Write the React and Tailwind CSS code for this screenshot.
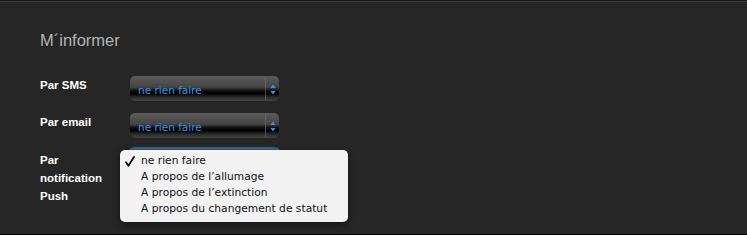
function Arrows() {
  return (
    <svg width="6" height="11" viewBox="0 0 6 11" className="block">
      <path d="M3 0.5 L5.6 4 L0.4 4 Z" fill="#3a8fe6" />
      <path d="M3 10.5 L5.6 7 L0.4 7 Z" fill="#3a8fe6" />
    </svg>
  );
}

function CheckMark() {
  return (
    <svg width="10" height="11" viewBox="0 0 10 11" className="block">
      <path d="M1 6.2 L3.4 9.8 L9 1" fill="none" stroke="#000" strokeWidth="1.7" strokeLinecap="round" strokeLinejoin="round" />
    </svg>
  );
}

function FakeSelect({ focused, label }) {
  return (
    <div
      className={
        "relative w-[149px] h-[25px] rounded-[5px] flex items-center bg-[linear-gradient(to_bottom,#5c5c5c_0%,#444_45%,#111_58%,#000_70%,#2a2a2a_85%,#444_100%)] " +
        (focused ? "ring-2 ring-[#3f7fc4]/70" : "")
      }
    >
      <span className="flex-1 pl-[8px] pt-[3px] text-[10.5px] text-[#3a8fe6] leading-none font-['DejaVu_Sans',sans-serif]">
        {label}
      </span>
      <div className="w-px self-stretch my-[1px] bg-[#6a6a6a]/70" />
      <div className="w-[13px] flex justify-center pt-[2px]">
        <Arrows />
      </div>
    </div>
  );
}

const items = [
  "ne rien faire",
  "A propos de l’allumage",
  "A propos de l’extinction",
  "A propos du changement de statut",
];

export default function App() {
  return (
    <div className="w-[747px] h-[235px] bg-[#262626] border-t border-[#151515] font-['Liberation_Sans',Arial,sans-serif]">
      <div className="h-full border-t border-[#3d3d3d] border-b border-b-black pl-[40px] pt-[28px]">
        <h2 className="text-[16.5px] leading-[20px] text-[#b3b3b3]">M´informer</h2>

        <div className="mt-[26px] flex flex-col">
          <div className="flex items-start">
            <div className="w-[90px] text-[11.5px] leading-[18px] font-bold text-white">Par SMS</div>
            <FakeSelect label="ne rien faire" />
          </div>

          <div className="mt-[12px] flex items-start">
            <div className="w-[90px] text-[11.5px] leading-[18px] font-bold text-white">Par email</div>
            <FakeSelect label="ne rien faire" />
          </div>

          <div className="mt-[11px] flex items-start">
            <div className="w-[90px] pt-[2px] text-[11.5px] leading-[18px] font-bold text-white">
              Par
              <br />
              notification
              <br />
              Push
            </div>
            <div className="relative">
              <FakeSelect focused label="" />
              <div className="absolute left-[-10px] top-[1px] w-[228px] h-[72px] rounded-[5px] bg-[#f2f2f2] shadow-[0_2px_6px_rgba(0,0,0,0.5)] pt-[3px] font-['DejaVu_Sans',sans-serif]">
                {items.map((t, i) => (
                  <div key={t} className="flex items-center h-[16px] text-[10.7px] text-[#111]">
                    <span className="w-[21px] pl-[5px]">{i === 0 && <CheckMark />}</span>
                    <span>{t}</span>
                  </div>
                ))}
              </div>
            </div>
          </div>
        </div>
      </div>
    </div>
  );
}
